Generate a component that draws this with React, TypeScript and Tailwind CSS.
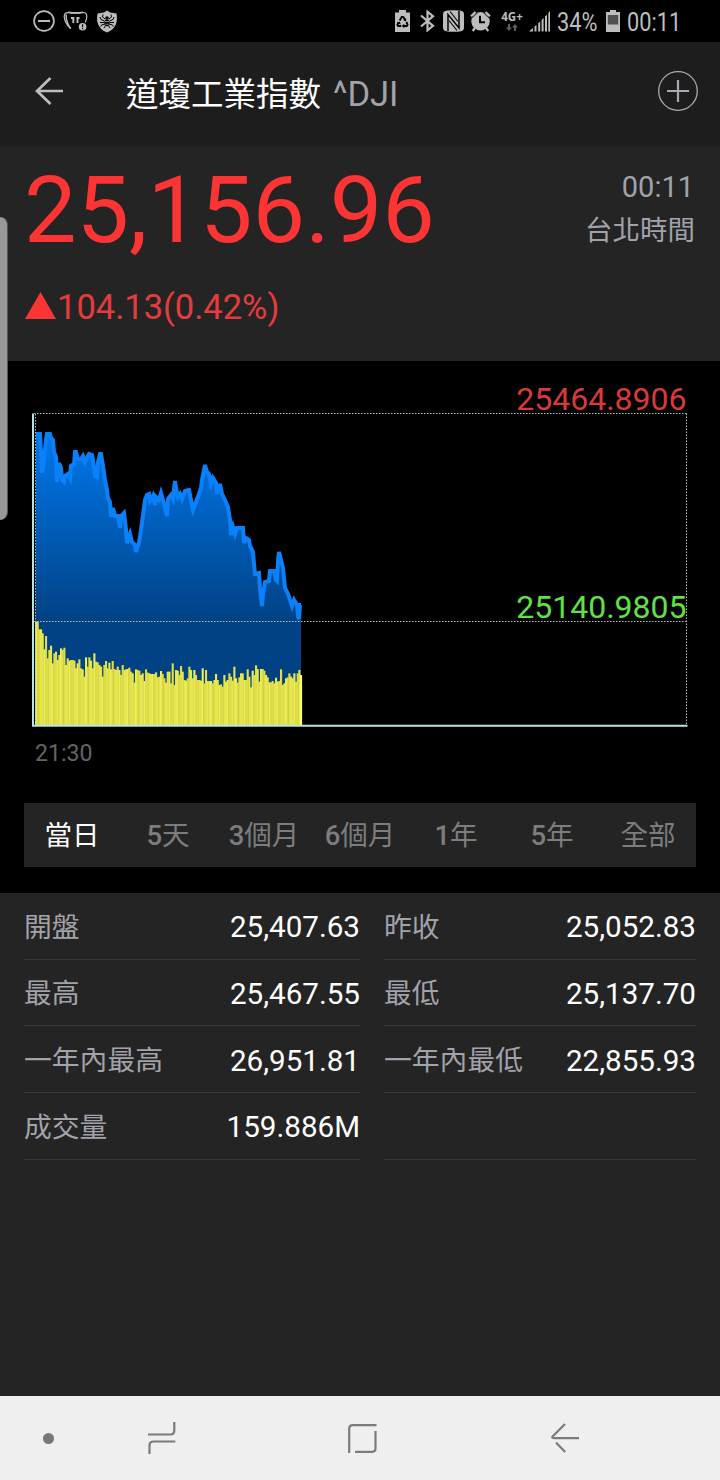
import type { ReactNode } from "react"
import clsx from "clsx"

const quote = {
  name: "道瓊工業指數",
  symbol: "^DJI",
  price: "25,156.96",
  change: "104.13(0.42%)",
  time: "00:11",
  zone: "台北時間",
  high: "25464.8906",
  low: "25140.9805",
}

const ranges = ["當日", "5天", "3個月", "6個月", "1年", "5年", "全部"]

const stats: [string, string][] = [
  ["開盤", "25,407.63"],
  ["昨收", "25,052.83"],
  ["最高", "25,467.55"],
  ["最低", "25,137.70"],
  ["一年內最高", "26,951.81"],
  ["一年內最低", "22,855.93"],
  ["成交量", "159.886M"],
  ["", ""],
]

const pricePoints =
  "36,434 40,434 41,452 42,473 44,460 46,440 47,434 50,434 51,438 53,440 54,452 56,457 57,482 59,463 61,468 62,480 64,482 65,476 68,474 70,478 71,466 74,464 75,452 76,452 78,459 81,459 83,456 85,462 87,458 89,454 92,455 93,460 95,476 97,477 98,462 100,454 101,454 103,466 105,480 107,490 108,498 110,502 111,517 113,508 115,516 118,516 120,528 121,516 124,513 125,520 126,530 127,543 130,534 132,542 135,545 136,552 138,545 139,543 141,530 143,515 145,500 147,495 149,494 150,501 152,498 153,496 155,505 156,497 159,500 161,493 163,500 165,508 167,516 168,499 171,495 173,499 175,481 176,488 178,497 180,494 182,499 185,491 189,490 191,500 193,510 196,502 199,494 201,488 202,480 205,465 207,472 209,474 211,484 213,478 216,483 217,494 220,484 222,494 225,500 228,507 230,520 231,535 233,527 235,534 237,528 243,528 244,543 246,538 249,540 250,546 253,552 254,564 255,574 259,573 260,588 262,606 263,594 265,582 269,581 270,571 274,571 276,580 277,581 278,562 279,552 281,560 283,568 284,578 285,588 288,594 290,600 292,606 294,600 297,605 298,616 299,619 300,605 301,605"

// One volume bar per minute, measured down from the middle grid line in thirds of a unit
const volumeTops = [
  65, 65, 88, 88, 100, 148, 108, 175, 150, 137, 190, 160, 155, 180, 165, 145, 150, 143, 195, 175,
  182, 180, 180, 182, 205, 190, 178, 205, 208, 230, 172, 200, 172, 182, 205, 160, 185, 187, 195,
  200, 230, 195, 183, 205, 188, 208, 183, 207, 210, 200, 210, 225, 195, 210, 208, 207, 203, 215,
  220, 248, 208, 210, 212, 225, 220, 243, 208, 218, 220, 222, 222, 222, 217, 232, 230, 213, 222,
  235, 248, 215, 215, 250, 190, 255, 210, 212, 225, 198, 215, 240, 242, 235, 200, 210, 235, 210,
  225, 240, 240, 242, 205, 250, 210, 243, 243, 243, 250, 240, 222, 240, 255, 253, 260, 225, 245,
  240, 220, 230, 242, 200, 235, 248, 232, 220, 220, 240, 240, 208, 230, 262, 212, 225, 196, 207,
  245, 207, 207, 212, 225, 232, 247, 247, 243, 250, 233, 245, 243, 208, 255, 250, 235, 232, 220,
  230, 235, 220, 245, 220, 210, 226,
]

const barColors = ["#eeee55", "#e0df49", "#e6e54d", "#dddc47", "#e8e74e"]

function StatusText({ children, className }: { children: ReactNode; className: string }) {
  return (
    <div className={clsx("shrink-0 pt-[3px]", className)}>
      <span className="inline-block origin-left scale-x-[0.87] whitespace-nowrap text-[25px] leading-[42px]">
        {children}
      </span>
    </div>
  )
}

function StatusBar() {
  return (
    <div className="flex h-[42px] items-center bg-black text-[#bdbdbd]">
      <svg className="ml-[33px] size-[22px]" viewBox="0 0 22 22" fill="none" stroke="currentColor">
        <circle cx="11" cy="11" r="9.900" strokeWidth="1.700" />
        <path d="M5 11h12" strokeWidth="2" />
      </svg>
      <svg className="ml-2 h-[22px] w-[25px]" viewBox="0 0 25 22" fill="none" stroke="currentColor">
        <path d="M8 18.500C4 16 1.200 10 1.200 6.500 1.200 3 3.500 2.300 6 2.600c3.500.6 9.500.6 13 0 2.500-.4 4.800.4 4.800 3.900 0 2-.6 4-1.500 6" strokeWidth="1.200" />
        <path d="M3.200 4.500C2.800 9 5 15 7.500 18.500" strokeWidth="1.500" />
        <path d="M5 2.200c5 .8 10 .8 15 0" strokeWidth="1.500" />
        <path d="M8 8h3.300M13.500 8h3M10.300 7.500V13M14.500 7.500V13" strokeWidth="1.900" />
        <circle cx="19.600" cy="16.700" r="3.800" fill="currentColor" stroke="none" />
        <path d="M19.600 14.300v3M19.600 18v1.200" stroke="#000" strokeWidth="1.100" />
      </svg>
      <svg className="ml-2 h-[23px] w-[22px]" viewBox="0 0 22 23">
        <path d="M11 .6 14 2.600 20.500 3.400C21.500 10 21.500 18 11 22.500.5 18 .5 10 1.500 3.400L8 2.600z" fill="currentColor" />
        <path
          d="m9 9-2.500-2 .5-2.500M13 9l2.500-2-.5-2.500M8.500 11 5 9.500 4 7M13.500 11 17 9.500 18 7M8.500 12.500H4M13.500 12.500H18M9 14l-3.500 1-.8 1.500M13 14l3.500 1 .8 1.500M9.500 15.500 8 18M12.500 15.500 14 18"
          stroke="#000"
          strokeWidth="1"
          fill="none"
        />
        <circle cx="11" cy="8" r="1.800" />
        <ellipse cx="11" cy="12.800" rx="2.600" ry="3.400" />
        <path d="M9 11.500h4M9.300 14.300h3.400" stroke="#bdbdbd" strokeWidth=".7" />
      </svg>

      <svg className="ml-auto h-[22px] w-[15px]" viewBox="0 0 15 22">
        <path d="M4 0h7v2.500h4V22H0V2.500h4z" fill="currentColor" />
        <g stroke="#000" strokeWidth="1.900" fill="none">
          <path d="m4.700 10.500 2-3.500h1.600l1.900 3M11.400 12l1.200 2.700-.8 1.300H8.500M6.300 16H3.200l-.8-1.300 1.300-2.500" />
        </g>
        <path d="m11.300 8.300-.3 3.200-2.800-1.400zM9.300 13.700v4.500L6.800 16zM1.800 12.500l3.200-.8.6 2.700z" />
      </svg>
      <svg className="ml-2.5 h-[22px] w-[15px]" viewBox="0 0 15 22" fill="none" stroke="currentColor" strokeWidth="2.200">
        <path d="m1 5.500 12 10.300-5.500 4.500V1.700L13 6.200 1 16.500" />
      </svg>
      <svg className="ml-2 h-[22px] w-[21px]" viewBox="0 0 21 22" fill="currentColor">
        <path d="M3 .8C7 0 14 0 18 .8c2.300.5 3 1.700 3 4.200v12c0 2.500-.7 3.700-3 4.200-4 .8-11 .8-15 0C.7 20.700 0 19.500 0 17V5C0 2.500.7 1.300 3 .8z" />
        <path d="M5 21V4.500L16 18V1" fill="none" stroke="#000" strokeWidth="1.500" />
        <path d="M8.300 12.500V20l4 1zM12.700 9.500V2l-4-1z" />
        <path d="m7 1.500 8 10M6 10.500l8 10" stroke="#000" strokeWidth="1.100" />
      </svg>
      <svg className="ml-1.5 h-[22px] w-[21px]" viewBox="0 0 21 22" fill="currentColor">
        <circle cx="10.500" cy="11.300" r="9.200" />
        <path d="M1 6.300 5.500 2M15.500 2 20 6.300M5 18l-2.300 3M16 18l2.300 3" stroke="currentColor" strokeWidth="2.200" />
        <path d="M2 8.200 7.500 2.700M13.500 2.700 19 8.200" stroke="#000" strokeWidth=".8" />
        <path d="M10 5.800v6.400h5" fill="none" stroke="#000" strokeWidth="2" />
      </svg>
      <div className="ml-[10px] flex h-[22px] w-[22px] flex-col items-center">
        <span className="font-['Open_Sans'] text-[11.500px] font-bold leading-[13px]">4G+</span>
        <svg className="mt-px h-[7px] w-3 text-[#5e5e5e]" viewBox="0 0 12 7" fill="currentColor">
          <path d="M2 0h2v3.500h2L3 7 0 3.500h2zM8 7h2V3.500h2L9 0 6 3.500h2z" />
        </svg>
      </div>
      <svg className="ml-[6px] h-[22px] w-[21px]" viewBox="0 0 21 22" fill="currentColor">
        <path d="M0 21.500 4 18v3.500zM5.500 16.500l2-1.500v6.500h-2zM9.200 13.200l2-1.800v10.100h-2zM12.600 9.800l2-1.800v13.500h-2zM16 6.500l2-1.800v16.800h-2zM19.300 3 21 1v20.500h-1.700z" />
      </svg>
      <StatusText className="ml-[7px] w-[42px]">34%</StatusText>
      <svg className="ml-[7px] h-[22px] w-[14px]" viewBox="0 0 14 22">
        <path d="M4 0h6v2h4v20H0V2h4z" fill="currentColor" />
        <path d="M1.800 5h10.400v9.500H1.800z" fill="#505050" />
      </svg>
      <StatusText className="ml-[7px] mr-[36px] w-[57px]">00:11</StatusText>
    </div>
  )
}

function Header() {
  return (
    <header className="flex h-[105px] items-center border-b border-[#222] bg-[#1d1d1d]">
      <svg className="ml-[35px] mb-1.5 h-7 w-[29px]" viewBox="0 0 29 28" fill="none" stroke="#bdbdbd" strokeWidth="2.700">
        <path d="M28 14H2M15.500 1 2 14l13.500 13" />
      </svg>
      <h1 className="ml-[62px] flex items-baseline text-[32.500px] font-normal leading-10 text-white">
        {quote.name}
        <span className="ml-3 text-[34.500px] text-[#a2a2ab]">{quote.symbol}</span>
      </h1>
      <svg className="mb-1.5 ml-auto mr-[22px] size-10" viewBox="0 0 40 40" fill="none" stroke="#a9a9b2">
        <circle cx="20" cy="20" r="19.300" strokeWidth="1.300" />
        <path d="M9 20h22M20 9v22" strokeWidth="2.200" />
      </svg>
    </header>
  )
}

function Summary() {
  return (
    <section className="flex h-[214px] justify-between bg-[#242424] px-6">
      <div className="text-[#fc3434]">
        <p className="mt-[15px] text-[93.500px] leading-[96px]">{quote.price}</p>
        <p className="mt-[27px] flex items-center text-[34.500px] leading-[44px] text-[#e43c3c]">
          <svg className="mb-1 ml-px h-[27px] w-[31px]" viewBox="0 0 31 27" fill="#fc3434">
            <path d="M15.500 0 31 27H0z" />
          </svg>
          <span className="ml-px">{quote.change}</span>
        </p>
      </div>
      <div className="mr-px mt-[18px] text-right text-[27.500px] leading-[44px] text-[#a2a2ab]">
        <p className="mr-px text-[29px]">{quote.time}</p>
        <p>{quote.zone}</p>
      </div>
    </section>
  )
}

function Chart() {
  return (
    <svg className="block h-[442px] w-full bg-black" viewBox="0 361 720 442">
      <defs>
        <linearGradient id="area" gradientUnits="userSpaceOnUse" x1="0" y1="432" x2="0" y2="622">
          <stop offset="0" stopColor="#0078ee" />
          <stop offset="1" stopColor="#004283" />
        </linearGradient>
      </defs>
      <polygon points={`35,726 ${pricePoints} 301,726`} fill="url(#area)" />
      <polyline points={pricePoints} fill="none" stroke="#0a80fb" strokeWidth="4" />
      {volumeTops.map((top, i) => {
        const y = 600 + top / 3
        return (
          <rect
            key={i}
            x={35 + (i * 5) / 3}
            y={y}
            width="2.100"
            height={725 - y}
            fill={barColors[(i * 3) % 5]}
          />
        )
      })}
      <rect x="300" y="675" width="2" height="50" fill="#ffff62" />

      {/* Grid frame and axes */}
      <g fill="none" stroke="#b9c0c0" strokeWidth="1" strokeDasharray="1.500 1.500">
        <path d="M34 413.500H686.500M34 621.500H686.500" />
        <path d="M686.500 413.500V725M35.500 414V725" />
      </g>
      <path d="M33 413.500V725.700H687.500" fill="none" stroke="#b7e3e3" strokeWidth="2" />

      <text x="686.500" y="410" textAnchor="end" fontSize="32" fill="#d83a3a">
        {quote.high}
      </text>
      <text x="686.500" y="618" textAnchor="end" fontSize="32" fill="#62e048">
        {quote.low}
      </text>
      <text x="35" y="761" fontSize="24" textLength="57.500" lengthAdjust="spacingAndGlyphs" fill="#646464">
        21:30
      </text>
    </svg>
  )
}

function RangeTabs() {
  return (
    <div className="bg-black px-6 pb-[26px]">
      <div className="grid h-16 grid-cols-7 items-center bg-[#242424] pt-0.5 text-center text-[27.500px] text-[#7d7d7d]">
        {ranges.map((range, i) => (
          <button key={range} className={clsx("whitespace-nowrap", i === 0 && "text-white")}>
            {/* Latin digits are set heavier than the characters beside them */}
            <span className="font-medium">{range.replace(/\D/g, "")}</span>
            {range.replace(/\d/g, "")}
          </button>
        ))}
      </div>
    </div>
  )
}

function Stats() {
  return (
    <dl className="grid grow grid-cols-[336px_312px] content-start gap-x-6 bg-[#242424] px-6">
      {stats.map(([label, value], i) => (
        <div
          key={i}
          className="flex h-[66.700px] items-center justify-between border-b border-[#393939] pt-[3px]"
        >
          <dt className="text-[27.800px] text-[#a2a2ab]">{label}</dt>
          <dd className="text-[29.600px] text-white">{value}</dd>
        </div>
      ))}
    </dl>
  )
}

function NavBar() {
  return (
    <nav className="flex h-[84px] items-center bg-[#efefef]">
      <div className="ml-[43px] size-[11px] rounded-full bg-[#777]" />
      <svg className="ml-[94px] h-8 w-7" viewBox="0 0 28 32" fill="none" stroke="#7b7b7b" strokeWidth="2.200">
        <path d="M26.300 0v8.500q0 4-4 4H0M27.300 19.500H5.500q-4 0-4 4V32" />
      </svg>
      <svg className="ml-[172px] h-[29px] w-[29px]" viewBox="0 0 29 29" fill="none" stroke="#7b7b7b" strokeWidth="2.200">
        <path d="M1.200 29V4.500q0-3.300 3.300-3.300H28.500M27.500 7v17.500q0 3.300-3.300 3.300H7" />
      </svg>
      <svg className="ml-[174px] h-[30px] w-7" viewBox="0 0 28 30" fill="none" stroke="#7b7b7b" strokeWidth="2.200">
        <path d="M14 1 1.800 13.200q-1.500 1.900.8 1.900H28M5 19.500l9.200 9.500" />
      </svg>
    </nav>
  )
}

export default function App() {
  return (
    <div className="relative flex h-[1480px] w-[720px] flex-col overflow-hidden bg-[#242424] font-['Roboto','Noto_Sans_CJK_TC',sans-serif]">
      <StatusBar />
      <Header />
      <Summary />
      <Chart />
      <RangeTabs />
      <Stats />
      <NavBar />
      {/* Edge panel handle, floats over the page */}
      <div className="absolute left-0 top-[217px] h-[303px] w-2 rounded-r-lg border-r border-[#555] bg-[#999]" />
    </div>
  )
}
